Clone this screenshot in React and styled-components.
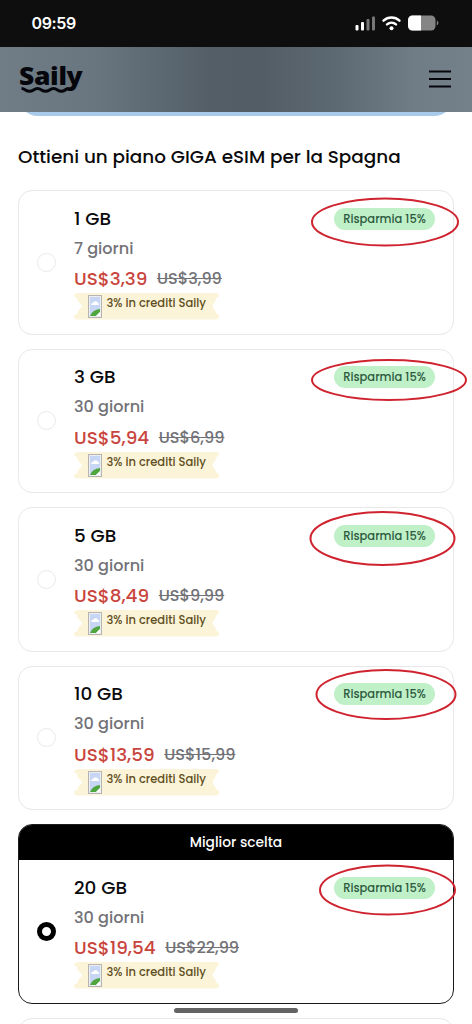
import React from "react";
import styled, { createGlobalStyle } from "styled-components";

const GlobalStyle = createGlobalStyle`
  * {
    box-sizing: border-box;
  }

  body {
    margin: 0;
    background: #fff;
    color: #0a0a0c;
    font-family: Poppins, Inter, "Liberation Sans", sans-serif;
    font-weight: 500;
  }
`;

const Screen = styled.div`
  position: relative;
  height: 1024px;
  overflow: hidden;
`;

const StatusBar = styled.div`
  display: flex;
  align-items: center;
  justify-content: space-between;
  height: 47px;
  padding: 0 33px 1px 31.5px;
  background: #0e0e0e;
  color: #fff;
`;

const Clock = styled.span`
  font-family: Inter, sans-serif;
  font-size: 16px;
  font-weight: 600;
  letter-spacing: -0.35px;
`;

const NavBar = styled.header`
  display: flex;
  align-items: center;
  justify-content: space-between;
  height: 64.5px;
  padding: 0 21px 0 19px;
  background: linear-gradient(
    90deg,
    #707c86 0%,
    #69767f 20%,
    #535e67 45%,
    #535d66 55%,
    #5c6871 70%,
    #707d86 88%,
    #74818a 100%
  );
`;

const Logo = styled.div`
  position: relative;
  width: 64px;
  height: 32px;
  color: #05070c;
`;

const LogoWord = styled.span`
  display: block;
  width: max-content;
  font-family: "Open Sans", sans-serif;
  font-size: 24.5px;
  font-weight: 800;
  line-height: 25px;
  letter-spacing: -0.3px;
  transform: scaleX(1.08);
  transform-origin: left;
`;

const LogoWave = styled.svg`
  position: absolute;
  left: 2px;
  top: 23px;
`;

const HeroEdge = styled.div`
  height: 4.5px;
  margin: 0 18px;
  overflow: hidden;
  display: flex;
  align-items: flex-end;

  &::after {
    content: "";
    flex: 1;
    height: 40px;
    border-radius: 20px;
    background: #a9cbeb;
  }
`;

const Heading = styled.h1`
  margin: 26px 0 18px 18px;
  font-size: 18.4px;
  font-weight: 500;
  line-height: 30px;
  white-space: nowrap;
`;

const PlanList = styled.div`
  display: flex;
  flex-direction: column;
  gap: 14px;
  padding: 0 18px;
`;

const Card = styled.section`
  flex: none;
  border: 1px solid ${({ $best }) => ($best ? "#1b1b1b" : "#e8e8e8")};
  border-radius: 14px;
  overflow: hidden;
`;

const BestBanner = styled.div`
  height: 35px;
  background: #000;
  color: #fff;
  font-size: 13.8px;
  line-height: 35px;
  text-align: center;
`;

const CardBody = styled.div`
  position: relative;
  display: flex;
  align-items: center;
  height: 142.5px;
  padding: 0 18px;
`;

const Radio = styled.span`
  width: 19px;
  height: 19px;
  margin-right: 18px;
  border: ${({ $checked }) => ($checked ? "5px solid #000" : "1.5px solid #e9e9e9")};
  border-radius: 50%;
`;

const Details = styled.div`
  flex: 1;
  align-self: flex-start;
  padding-top: 12px;
`;

const Line = styled.div`
  display: flex;
  align-items: center;
  height: 30.3px;
  white-space: nowrap;
`;

const Size = styled.span`
  font-size: 18.4px;
`;

const Days = styled.span`
  font-size: 16.1px;
  color: #727277;
`;

const Price = styled.span`
  font-size: 18.4px;
  color: #c9453d;
`;

const OldPrice = styled.span`
  margin-left: 9.5px;
  font-size: 16.1px;
  color: #727277;
  text-decoration: line-through;
`;

const Ticket = styled.div`
  position: relative;
  display: flex;
  width: 145px;
  height: 27px;
  margin-top: -0.5px;
  padding-left: 14px;
  color: #5f4e22;
  font-size: 11.5px;
  line-height: 21.5px;
  white-space: nowrap;
`;

const TicketShape = styled.svg`
  position: absolute;
  inset: 0;
`;

const MissingImage = styled.svg`
  position: relative;
  margin: 2px 4.5px 0 0;
`;

const TicketText = styled.span`
  position: relative;
`;

const Badge = styled.span`
  align-self: flex-start;
  width: 101px;
  height: 22px;
  margin-top: 16.5px;
  border-radius: 11px;
  background: #c0f0c8;
  color: #2c5a40;
  font-size: 11.5px;
  line-height: 22px;
  text-align: center;
  white-space: nowrap;
`;

const Marker = styled.svg`
  position: absolute;
  inset: 0;
  pointer-events: none;
`;

const HomeIndicator = styled.div`
  position: absolute;
  left: 174px;
  bottom: 11px;
  width: 124px;
  height: 5px;
  border-radius: 3px;
  background: #646464;
`;

const plans = [
  { size: "1 GB", days: "7 giorni", price: "US$3,39", old: "US$3,99" },
  { size: "3 GB", days: "30 giorni", price: "US$5,94", old: "US$6,99" },
  { size: "5 GB", days: "30 giorni", price: "US$8,49", old: "US$9,99" },
  { size: "10 GB", days: "30 giorni", price: "US$13,59", old: "US$15,99" },
  { size: "20 GB", days: "30 giorni", price: "US$19,54", old: "US$22,99", best: true },
];

// hand drawn circles around the discount badges
const circles = [
  { cx: 385, cy: 222, rx: 73, ry: 23.5 },
  { cx: 389, cy: 380, rx: 77, ry: 20 },
  { cx: 382.5, cy: 538.5, rx: 72, ry: 26.5 },
  { cx: 386, cy: 694.5, rx: 69.5, ry: 24.5 },
  { cx: 387.5, cy: 890, rx: 67.5, ry: 24.5 },
];

const StatusIcons = () => (
  <svg width="84" height="18" viewBox="0 0 84 18">
    <rect x="0.5" y="11" width="3" height="5.5" rx="1" fill="#fff" />
    <rect x="6" y="8" width="3" height="8.5" rx="1" fill="#fff" />
    <rect x="11.5" y="5" width="3" height="11.5" rx="1" fill="#777" />
    <rect x="17" y="2.5" width="3" height="14" rx="1" fill="#777" />
    <g fill="none" stroke="#fff" strokeWidth="2.4" strokeLinecap="round">
      <path d="M28.5 6.7a11.8 11.8 0 0 1 16 0" />
      <path d="M32 10.4a6.8 6.8 0 0 1 9 0" />
    </g>
    <circle cx="36.5" cy="14.3" r="2" fill="#fff" />
    <rect x="53" y="1.5" width="27.5" height="15" rx="4.5" fill="#858585" />
    <path d="M66 1.5h-8.5a4.5 4.5 0 0 0-4.5 4.5v6a4.5 4.5 0 0 0 4.5 4.5h8.5z" fill="#fff" />
    <path d="M81.8 6.5q1.6 0.7 1.6 2.5t-1.6 2.5z" fill="#858585" />
  </svg>
);

const MenuIcon = () => (
  <svg width="22" height="18" viewBox="0 0 22 18">
    <path d="M0 1.5h22M0 9h22M0 16.5h22" stroke="#05070c" strokeWidth="2" />
  </svg>
);

const CreditTicket = () => (
  <Ticket>
    <TicketShape width="145" height="27" viewBox="0 0 145 27">
      <path
        d="M3 0H142a3 3 0 0 1 3 3q-3 1.5-3.5 4.5t-3 4.5q0 2.500 1.500 4t2 3.500q1 2 3 2.500v1.500a3 3 0 0 1-3 3H3a3 3 0 0 1-3-3v-1q3.500-1 4-3.500t4-5q0-2-2.500-4t-2.500-4-3-2.500a3 3 0 0 1 3-3z"
        fill="#fcf4d9"
      />
    </TicketShape>
    <MissingImage width="14" height="23" viewBox="0 0 14 23">
      <rect x="0.5" y="0.5" width="13" height="22" fill="#eee" stroke="#b4b4b4" />
      <rect x="2" y="2" width="10" height="19" fill="#c7d6f4" />
      <path d="M3 10q0-2 2-2 1-2.5 3-1.5 1.5-0.5 2 1.5 1.5 0.5 1 2z" fill="#fff" />
      <path d="M2 21q2-6 10-7v3l-4 4z" fill="#4fa63e" />
      <path d="M8 21l4-4v4z" fill="#fff" />
    </MissingImage>
    <TicketText>3% in crediti Saily</TicketText>
  </Ticket>
);

const PlanCard = ({ plan }) => (
  <Card $best={plan.best}>
    {plan.best && <BestBanner>Miglior scelta</BestBanner>}
    <CardBody>
      <Radio $checked={plan.best} />
      <Details>
        <Line>
          <Size>{plan.size}</Size>
        </Line>
        <Line>
          <Days>{plan.days}</Days>
        </Line>
        <Line>
          <Price>{plan.price}</Price>
          <OldPrice>{plan.old}</OldPrice>
        </Line>
        <CreditTicket />
      </Details>
      <Badge>Risparmia 15%</Badge>
    </CardBody>
  </Card>
);

const App = () => {
  return (
    <Screen>
      <GlobalStyle />
      <StatusBar>
        <Clock>09:59</Clock>
        <StatusIcons />
      </StatusBar>
      <NavBar>
        <Logo>
          <LogoWord>Saily</LogoWord>
          <LogoWave width="50" height="8" viewBox="0 0 50 8">
            <path
              d="M0.5 2.5c4 0 4 2.8 8 2.8s4-2.8 8-2.8 4 2.8 8 2.8 4-2.8 8-2.8 4 2.8 8 2.8 3-2.3 7-2.8"
              fill="none"
              stroke="#05070c"
              strokeWidth="3"
            />
          </LogoWave>
        </Logo>
        <MenuIcon />
      </NavBar>
      <HeroEdge />
      <Heading>Ottieni un piano GIGA eSIM per la Spagna</Heading>
      <PlanList>
        {plans.map((plan) => (
          <PlanCard key={plan.size} plan={plan} />
        ))}
        <Card>
          <CardBody />
        </Card>
      </PlanList>
      <Marker width="472" height="1024" viewBox="0 0 472 1024">
        {circles.map((c) => (
          <ellipse key={c.cy} {...c} fill="none" stroke="#cf2430" strokeWidth="2" />
        ))}
      </Marker>
      <HomeIndicator />
    </Screen>
  );
};

export default App;
